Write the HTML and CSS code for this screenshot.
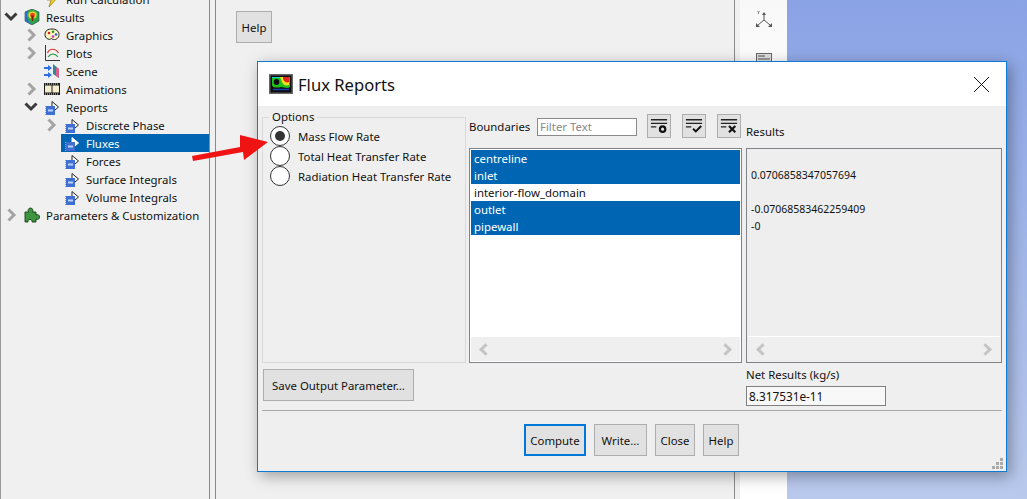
FILE: index.html
```html
<!DOCTYPE html>
<html lang="en">
<head>
    <meta charset="UTF-8">
    <title>Flux Reports</title>
    <link rel="stylesheet" href="styles.css">
</head>
<body>
    <div class="app">
        <ul class="tree">
            <li class="row depth-1"><span class="tw"></span><svg class="ico" viewBox="0 0 16 16"><path d="M9 0L3 9h4l-2 7 9-10H9l3-6z" fill="#f7cf1d" stroke="#7a6200" stroke-width=".6"/></svg>Run Calculation</li>
            <li class="row depth-0"><svg class="tw" viewBox="0 0 14 14"><path d="M1.5 3.5L7 9l5.5-5.5" class="open"/></svg><svg class="ico" viewBox="0 0 16 16"><path d="M8 0l7 3v9l-7 4-7-4V3z" fill="#2fa343" stroke="#23405c" stroke-width=".6"/><path d="M1 3l3-1.500v10L8 16l-7-4z" fill="#2e6bd0"/><ellipse cx="8.500" cy="6" rx="5.500" ry="5" fill="#38b54a"/><ellipse cx="8.500" cy="6" rx="4" ry="3.600" fill="#f1d722"/><ellipse cx="8.500" cy="6" rx="2.500" ry="2.300" fill="#ea4a1e"/><path d="M7 6.500h3l-1 5.500H8z" fill="#8a1c10"/></svg>Results</li>
            <li class="row depth-1"><svg class="tw" viewBox="0 0 14 14"><path d="M4.500 1.500L10 7l-5.500 5.500" class="shut"/></svg><svg class="ico" viewBox="0 0 16 16"><path d="M8 2c4 0 7 2 7 5.500S12 13 9.500 12.500 8 11 6.500 12 1 11.500 1 7.500 4 2 8 2z" fill="#fdf6bf" stroke="#222"/><circle cx="5" cy="6" r="1.300" fill="#d22"/><circle cx="9" cy="4.800" r="1.300" fill="#1a9a2a"/><circle cx="12" cy="7.500" r="1.300" fill="#2a5fd0"/><circle cx="9" cy="9.500" r="1.300" fill="#c62ac6"/></svg>Graphics</li>
            <li class="row depth-1"><svg class="tw" viewBox="0 0 14 14"><path d="M4.500 1.500L10 7l-5.500 5.500" class="shut"/></svg><svg class="ico" viewBox="0 0 16 16"><path d="M1.500 0v15.500H16" fill="none" stroke="#333"/><path d="M3.500 8c2-5 8-5 11 0" fill="none" stroke="#d33" stroke-width="1.200"/><path d="M4 12c3-4 7-4 10 0" fill="none" stroke="#1f9a3a" stroke-width="1.200"/></svg>Plots</li>
            <li class="row depth-1"><span class="tw"></span><svg class="ico" viewBox="0 0 16 16"><path d="M9 1l6 5v9l-6-4z" fill="#2b8c96"/><path d="M12 4l3 2v9l-3-2z" fill="#d9608a"/><path d="M0 5h5M0 12h5" stroke="#2f6fe0" stroke-width="2"/><path d="M4 2l4 3-4 3zM4 9l4 3-4 3z" fill="#2f6fe0"/></svg>Scene</li>
            <li class="row depth-1"><svg class="tw" viewBox="0 0 14 14"><path d="M4.500 1.500L10 7l-5.500 5.500" class="shut"/></svg><svg class="ico" viewBox="0 0 16 16"><rect y="2" width="16" height="12" fill="#1c1c1c"/><rect x="1" y="4.500" width="6.500" height="7" fill="#f4eecf"/><rect x="8.500" y="4.500" width="6.500" height="7" fill="#f4eecf"/><path d="M1 3h14M1 13h14" stroke="#ddd" stroke-width="1" stroke-dasharray="1 1"/></svg>Animations</li>
            <li class="row depth-1"><svg class="tw" viewBox="0 0 14 14"><path d="M1.500 3.500L7 9l5.500-5.500" class="open"/></svg><svg class="ico"><use href="#report"/></svg>Reports</li>
            <li class="row depth-2"><svg class="tw" viewBox="0 0 14 14"><path d="M4.500 1.500L10 7l-5.500 5.500" class="shut"/></svg><svg class="ico"><use href="#report"/></svg>Discrete Phase</li>
            <li class="row depth-2 selected"><span class="tw"></span><svg class="ico"><use href="#report"/></svg>Fluxes</li>
            <li class="row depth-2"><span class="tw"></span><svg class="ico"><use href="#report"/></svg>Forces</li>
            <li class="row depth-2"><span class="tw"></span><svg class="ico"><use href="#report"/></svg>Surface Integrals</li>
            <li class="row depth-2"><span class="tw"></span><svg class="ico"><use href="#report"/></svg>Volume Integrals</li>
            <li class="row depth-0"><svg class="tw" viewBox="0 0 14 14"><path d="M4.500 1.500L10 7l-5.500 5.500" class="shut"/></svg><svg class="ico" viewBox="0 0 16 16"><path d="M1 5h3.500c-1-2 0-4 2-4s3 2 2 4H12v3c2-1 3.500 0 3.500 2s-1.500 3-3.500 2v3H8c.5-1.500-.5-2.500-2-2.500S3.500 13.500 4 15H1z" fill="#3f9440" stroke="#123f12" stroke-width=".9"/></svg>Parameters &amp; Customization</li>
        </ul>
        <div class="gutter"></div>
        <main class="console"><button class="btn top-help">Help</button></main>
        <div class="gutter right"></div>
        <aside class="toolbar">
            <svg class="axis" viewBox="0 0 16 16"><path d="M8 3v6M8 9l-6 5M8 9l6 5" fill="none" stroke="#555"/><path d="M6 4l2-3 2 3zM0 12v4h4zM16 12v4h-4z" fill="#555"/><path d="M1.500 0l1 1.500 1-1.500M2.500 1.500V3" fill="none" stroke="#555" stroke-width=".7"/></svg>
            <svg class="tool" viewBox="0 0 16 12"><rect x=".5" y=".5" width="15" height="11" fill="#ddd" stroke="#666"/><path d="M2 3h7M2 6h12" stroke="#555"/></svg>
        </aside>
        <div class="view"></div>
    </div>

    <svg class="defs" width="0" height="0">
        <symbol id="report" viewBox="0 0 16 16">
            <path class="rep-edge" d="M8 2.500l6.500 5.500-6.500 5.500z" fill="#fff" stroke-width="1"/>
            <rect x="2" y="7" width="9" height="9" fill="#3f6fd2"/>
            <path d="M1.500 7v9" stroke="#8aa4d8" stroke-dasharray="1 1"/>
            <rect x="4" y="10.500" width="5" height="2" fill="#bcd2fa"/>
        </symbol>
    </svg>

    <svg class="arrow" viewBox="0 0 80 28"><path d="M2 22L50 13 50 1 78 8 54 26 53 18 3 27z" fill="#f01313"/></svg>

    <section class="dialog">
        <header class="title">
            <svg class="logo" viewBox="0 0 24 20"><rect width="24" height="20" fill="#666"/><rect x="1.500" y="1.500" width="21" height="17" fill="#0c0c0c"/><path d="M3 3h18v10c-3 2-6 0-9 0-3 1-9 1-9-2z" fill="#1fc01c"/><path d="M11 3h9v8c-3 1-6 0-7-3z" fill="#f2e01a"/><path d="M14 3h6v5c-2 1-5 0-6-3z" fill="#e2261a"/><path d="M3 3h8v1H3z" fill="#19c9d8"/><ellipse cx="7.500" cy="8" rx="2.800" ry="3" fill="#0c0c0c"/><path d="M4 15.500h16" stroke="#1c3fb8" stroke-width="1.500"/></svg>
            <h1>Flux Reports</h1>
            <svg class="close" viewBox="0 0 15 15"><path d="M0 0l15 15M15 0L0 15" stroke="#111"/></svg>
        </header>
        <div class="body">
            <div class="columns">
                <fieldset class="options">
                    <legend>Options</legend>
                    <label class="radio"><span class="dot on"></span>Mass Flow Rate</label>
                    <label class="radio"><span class="dot"></span>Total Heat Transfer Rate</label>
                    <label class="radio"><span class="dot"></span>Radiation Heat Transfer Rate</label>
                </fieldset>
                <div class="boundaries">
                    <div class="bar">
                        <span class="bar-label">Boundaries</span>
                        <input class="filter" placeholder="Filter Text">
                        <button class="icon-btn"><svg viewBox="0 0 20 18"><path d="M1 2h18M1 6h18M1 10h6" stroke="#222" stroke-width="1.500"/><circle cx="14" cy="12.500" r="3" fill="none" stroke="#111" stroke-width="2.400"/></svg></button>
                        <button class="icon-btn"><svg viewBox="0 0 20 18"><path d="M1 2h18M1 6h18M1 10h6" stroke="#222" stroke-width="1.500"/><path d="M9 12l3 3 6-6" fill="none" stroke="#111" stroke-width="2.200"/></svg></button>
                        <button class="icon-btn"><svg viewBox="0 0 20 18"><path d="M1 2h18M1 6h18M1 10h6" stroke="#222" stroke-width="1.500"/><path d="M10 9l7 7M17 9l-7 7" stroke="#111" stroke-width="2.400"/></svg></button>
                    </div>
                    <div class="list-box">
                        <ul class="list">
                            <li class="picked">centreline</li>
                            <li class="picked">inlet</li>
                            <li>interior-flow_domain</li>
                            <li class="picked">outlet</li>
                            <li class="picked">pipewall</li>
                        </ul>
                        <div class="scroll"><i class="back"></i><i class="next"></i></div>
                    </div>
                </div>
                <div class="results">
                    <div class="res-head">Results</div>
                    <div class="list-box grey">
                        <div class="res-text">
                            <div>&nbsp;</div>
                            <div>0.0706858347057694</div>
                            <div>&nbsp;</div>
                            <div>-0.07068583462259409</div>
                            <div>-0</div>
                        </div>
                        <div class="scroll"><i class="back"></i><i class="next"></i></div>
                    </div>
                </div>
            </div>
            <div class="under">
                <button class="btn save">Save Output Parameter...</button>
                <div class="net">
                    <label>Net Results (kg/s)</label>
                    <output class="net-val">8.317531e-11</output>
                </div>
            </div>
            <hr class="rule">
            <div class="actions">
                <button class="btn focus">Compute</button>
                <button class="btn">Write...</button>
                <button class="btn">Close</button>
                <button class="btn">Help</button>
            </div>
            <svg class="grip" viewBox="0 0 11 11"><path d="M8 0h3v3H8zM4 4h3v3H4zM8 4h3v3H8zM0 8h3v3H0zM4 8h3v3H4zM8 8h3v3H8z" fill="#aaa"/></svg>
        </div>
    </section>
</body>
</html>
```

FILE: styles.css
```css
* { box-sizing: border-box; }
html, body { margin: 0; height: 100%; overflow: hidden; }
body { font-family: "Noto Sans", "Open Sans", sans-serif; font-size: 11.4px; color: #111; background: #f0f0f0; }
button, input { font: inherit; color: inherit; }

.app { display: flex; height: 499px; }
.tree { list-style: none; margin: -10px 0 0; padding: 0; width: 210px; height: 509px; flex: none; background: #f0f0f0; border-left: 1px solid #999; border-right: 1px solid #8a8a8a; overflow: hidden; }
.row { display: flex; align-items: center; height: 18px; white-space: nowrap; }
.depth-0 { padding-left: 3px; }
.depth-1 { padding-left: 23px; }
.depth-2 { padding-left: 43px; }
.selected { background: #0066b3; color: #fff; margin-left: 60px; padding-left: 3px; --edge: #fff; }
.selected .tw { display: none; }
.tw { width: 14px; height: 14px; margin-right: 6px; flex: none; }
.ico { width: 16px; height: 16px; margin-right: 6px; flex: none; }
.open { fill: none; stroke: #3a3a3a; stroke-width: 3; }
.shut { fill: none; stroke: #a4a4a4; stroke-width: 3; }
.rep-edge { stroke: var(--edge, #222); }

.gutter { width: 6px; flex: none; background: #f0f0f0; border-right: 1px solid #8a8a8a; }
.gutter.right { border-right: 0; border-left: 1px solid #8a8a8a; }
.console { width: 518px; flex: none; background: #f0f0f0; padding: 11px 0 0 20px; }
.toolbar { width: 47px; flex: none; background: linear-gradient(#f8f8f8, #fff 30%); display: flex; flex-direction: column; align-items: center; padding-top: 11px; gap: 26px; }
.axis { width: 16px; height: 16px; flex: none; }
.tool { width: 16px; height: 12px; flex: none; }
.view { flex: 1; background: linear-gradient(#8aa3e5, #b9c9ec); }
.defs { position: absolute; }

.btn { background: #e1e1e1; border: 1px solid #adadad; height: 32px; padding: 0 4px; white-space: nowrap; }
.top-help { width: 36px; padding: 0; }

.arrow { position: absolute; left: 190px; top: 134px; width: 80px; height: 28px; z-index: 2; }

.dialog { position: absolute; left: 257px; top: 61px; width: 750px; height: 411px; background: #efefef; border: 1px solid #0f7ad6; box-shadow: 3px 4px 14px rgba(0,0,0,.35); display: flex; flex-direction: column; }
.title { height: 44px; background: #fff; display: flex; align-items: center; padding: 0 17px 0 11px; flex: none; }
.logo { width: 24px; height: 20px; margin-right: 5px; }
h1 { font-size: 16.6px; font-weight: 400; margin: 0; flex: 1; }
.close { width: 15px; height: 15px; }

.body { flex: 1; padding: 0 4px; display: flex; flex-direction: column; position: relative; }
.columns { display: flex; height: 257px; flex: none; }
.options { width: 204px; margin: 4px 3px 0 0; padding: 2px 0 0 7px; border: 1px solid #d9d9d9; min-width: 0; }
legend { padding: 0 3px; margin-left: -1px; line-height: 14px; }
.radio { display: flex; align-items: center; height: 20px; gap: 8px; }
.dot { width: 20px; height: 20px; border-radius: 50%; border: 1px solid #333; background: #fff; display: flex; align-items: center; justify-content: center; }
.dot.on::after { content: ""; width: 10px; height: 10px; border-radius: 50%; background: #333; }

.boundaries { width: 273px; margin-right: 4px; display: flex; flex-direction: column; flex: none; }
.bar { display: flex; align-items: center; height: 42px; flex: none; }
.bar-label { width: 68px; flex: none; margin-top: -2px; }
.filter { width: 100px; height: 18px; border: 1px solid #8a8a8a; background: #fff; padding: 0 2px; margin: -1px 10px 0 0; flex: none; }
.filter::placeholder { color: #888; }
.icon-btn { width: 24px; height: 24px; padding: 2px; background: #e1e1e1; border: 1px solid #adadad; margin: -2px 11px 0 0; flex: none; }
.icon-btn:last-child { margin-right: 0; }
.icon-btn svg { display: block; width: 18px; height: 18px; }

.list-box { flex: 1; border: 1px solid #808488; background: #fff; padding: 1px; display: flex; flex-direction: column; }
.list-box.grey { background: #eee; }
.list { list-style: none; margin: 0; padding: 0; flex: 1; }
.list li { height: 17px; line-height: 17px; padding-left: 3px; }
.list .picked { background: #0066b3; color: #fff; }
.scroll { height: 24px; background: #efefef; display: flex; justify-content: space-between; align-items: center; padding: 0 10px; flex: none; }
.grey .scroll { height: 25px; border-top: 1px solid #fff; }
.scroll i { width: 9px; height: 9px; border-left: 3px solid #c4c4c4; border-bottom: 3px solid #c4c4c4; }
.scroll .back { transform: rotate(45deg); }
.scroll .next { transform: rotate(225deg); }

.results { width: 256px; display: flex; flex-direction: column; flex: none; }
.res-head { height: 42px; line-height: 52px; flex: none; }
.res-text { flex: 1; padding: 0 0 0 3px; font-size: 10.5px; }
.res-text div { height: 17px; line-height: 17px; }

.under { display: flex; justify-content: space-between; height: 47px; flex: none; }
.save { width: 151px; margin: 6px 0 0 1px; }
.net { width: 256px; display: flex; flex-direction: column; padding-top: 3px; }
.net label { height: 20px; line-height: 18px; flex: none; }
.net-val { width: 140px; height: 20px; line-height: 18px; border: 1px solid #808080; background: #f8f8f8; padding-left: 2px; font-size: 11.8px; }
.rule { border: 0; border-top: 1px solid #a8a8a8; margin: 0; flex: none; }
.actions { display: flex; justify-content: flex-end; gap: 8px; padding: 13px 263px 0 0; }
.actions .btn { padding: 0; }
.actions .btn:nth-child(1) { width: 62px; }
.actions .btn:nth-child(2) { width: 53px; }
.actions .btn:nth-child(3) { width: 40px; }
.actions .btn:nth-child(4) { width: 36px; }
.focus { border: 2px solid #0078d7; }
.grip { position: absolute; right: 3px; bottom: 2px; width: 11px; height: 11px; }
```
